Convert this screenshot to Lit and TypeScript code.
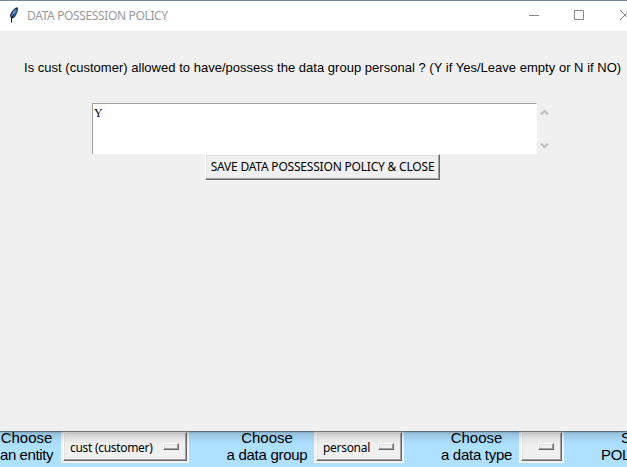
import { LitElement, html, css, svg } from "lit";
import { customElement, property } from "lit/decorators.js";

@customElement("option-menu")
class OptionMenu extends LitElement {
  @property() label = "";
  static styles = css`
    :host { display: block; height: 32px; box-sizing: border-box; padding: 1px 2px 2px; background: #f4f4f4; }
    .face {
      height: 29px; box-sizing: border-box; display: flex; align-items: center; justify-content: space-between;
      padding: 0 5px 0 5px; background: #f0f0f0;
      border: 1px solid; border-color: #fff #696969 #696969 #fff;
      box-shadow: inset -1px -1px #a0a0a0, inset 1px 1px #e3e3e3;
      font: 12px/16px "Noto Sans", sans-serif; letter-spacing: -.3px; color: #000; white-space: nowrap;
    }
    .text { padding: 2px 0 0 1px; }
    .mark {
      width: 16px; height: 7px; box-sizing: border-box; flex: none; margin: 0 2px 1px 0;
      background: #f0f0f0; border: 1px solid; border-color: #fff #696969 #696969 #fff;
      box-shadow: inset -1px -1px #a0a0a0, inset 1px 1px #e3e3e3;
    }
  `;
  render() {
    return html`<div class="face"><span class="text">${this.label}</span><span class="mark"></span></div>`;
  }
}

const feather = svg`
  <path d="M8 .5H10V1.500H9.800V4L8.500 7 7 10 4.500 11.500 2.500 10.500 2 8 3.500 5 6 2Z" fill="#17202b"/>
  <path d="M9 1.500 9.200 3.500 8 6.500 6.500 9.500 4.500 10.500 5.500 7Z" fill="#2f74cc"/>
  <path d="M8 1.800 6 3.500 4 6.500 3.200 9.500 5 8.500 7.500 4.500Z" fill="#6ca6e8"/>
  <path d="M6.500 6.500 4.500 9.500 3.500 12V15.500" fill="none" stroke="#101418"/>`;

@customElement("app-root")
class AppRoot extends LitElement {
  static styles = css`
    :host { display: flex; flex-direction: column; width: 627px; height: 467px; overflow: hidden; background: #aee0ff; font-family: "Liberation Sans", Arial, sans-serif; color: #000; }
    .dialog { position: relative; height: 431px; flex: none; box-sizing: border-box; border-top: 1px solid #708b9e; background: #f0f0f0; box-shadow: 0 1px 1px rgba(0,0,0,.42), 0 2px 12px rgba(0,0,0,.3); }
    .titlebar { height: 30px; background: #fff; display: flex; align-items: center; }
    .feather { width: 13px; height: 17px; margin: -1px 6px 0 8px; flex: none; }
    .title { flex: 1; font: 12px/16px "Noto Sans", sans-serif; letter-spacing: -.36px; color: #999; white-space: nowrap; }
    .controls { flex: none; width: 99px; height: 12px; display: block; margin-top: -2px; }
    .question { margin: 29px 0 0 24px; height: 16px; font-size: 13px; line-height: 16px; letter-spacing: .02px; white-space: nowrap; }
    .entry { display: flex; margin: 27px 0 0 92px; height: 51px; }
    .input { width: 445px; box-sizing: border-box; background: #fff; border-top: 1px solid #a0a0a0; border-left: 1px solid #a0a0a0; border-right: 1px solid #fff; padding: 1px 1px; font: 12px/16px "Liberation Serif", "Courier New", serif; }
    .scroll { width: 17px; height: 51px; }
    .save {
      display: flex; align-items: center; justify-content: center; margin: 0 0 0 205px; width: 235px; height: 26px; box-sizing: border-box; padding: 0; border-radius: 0;
      background: #f0f0f0; border: 1px solid; border-color: #fff #696969 #696969 #fff;
      box-shadow: inset -1px -1px #a0a0a0, inset 1px 1px #e3e3e3;
      font: 12px/16px "Noto Sans", sans-serif; letter-spacing: -.2px; color: #000; white-space: nowrap;
    }
    .strip { display: grid; grid-template-columns: 53px 8px 128px 37px 82px 6px 90px 36px 73px 6px 45px 37px 26px; height: 36px; }
    .label { font-size: 15px; line-height: 17px; margin-top: -2px; text-align: center; white-space: nowrap; }
    .second { letter-spacing: -.28px; }
    .c1 .second { letter-spacing: -.42px; }
    .last { text-align: left; overflow: hidden; }
    .indent { padding-left: 20px; }
    .c1 { grid-column: 1; } .c3 { grid-column: 3; } .c5 { grid-column: 5; } .c7 { grid-column: 7; }
    .c9 { grid-column: 9; } .c11 { grid-column: 11; } .c13 { grid-column: 13; }
  `;
  render() {
    return html`
      <div class="dialog">
        <div class="titlebar">
          <svg class="feather" viewBox="0 0 13 17">${feather}</svg>
          <span class="title">DATA POSSESSION POLICY</span>
          <svg class="controls" viewBox="0 0 99 12" fill="none" stroke="#888">
            <path d="M1 6.5H11M46.500 1.500H55.500V10.500H46.500ZM92 1 102 11M92 11 102 1"/>
          </svg>
        </div>
        <div class="question">Is cust (customer) allowed to have/possess the data group personal ? (Y if Yes/Leave empty or N if NO)</div>
        <div class="entry">
          <div class="input">Y</div>
          <svg class="scroll" viewBox="0 0 17 51" fill="none" stroke="#bdbdbd" stroke-width="2"><path d="M4 11.500 7.500 8 11 11.500M4 40.500 7.500 44 11 40.500"/></svg>
        </div>
        <button class="save">SAVE DATA POSSESSION POLICY &amp; CLOSE</button>
      </div>
      <div class="strip">
        <div class="label c1">Choose<br><span class="second">an entity</span></div>
        <option-menu class="c3" label="cust (customer)"></option-menu>
        <div class="label c5">Choose<br><span class="second">a data group</span></div>
        <option-menu class="c7" label="personal"></option-menu>
        <div class="label c9">Choose<br><span class="second">a data type</span></div>
        <option-menu class="c11"></option-menu>
        <div class="label last c13"><span class="indent">S</span><br><span class="second">POL</span></div>
      </div>`;
  }
}
